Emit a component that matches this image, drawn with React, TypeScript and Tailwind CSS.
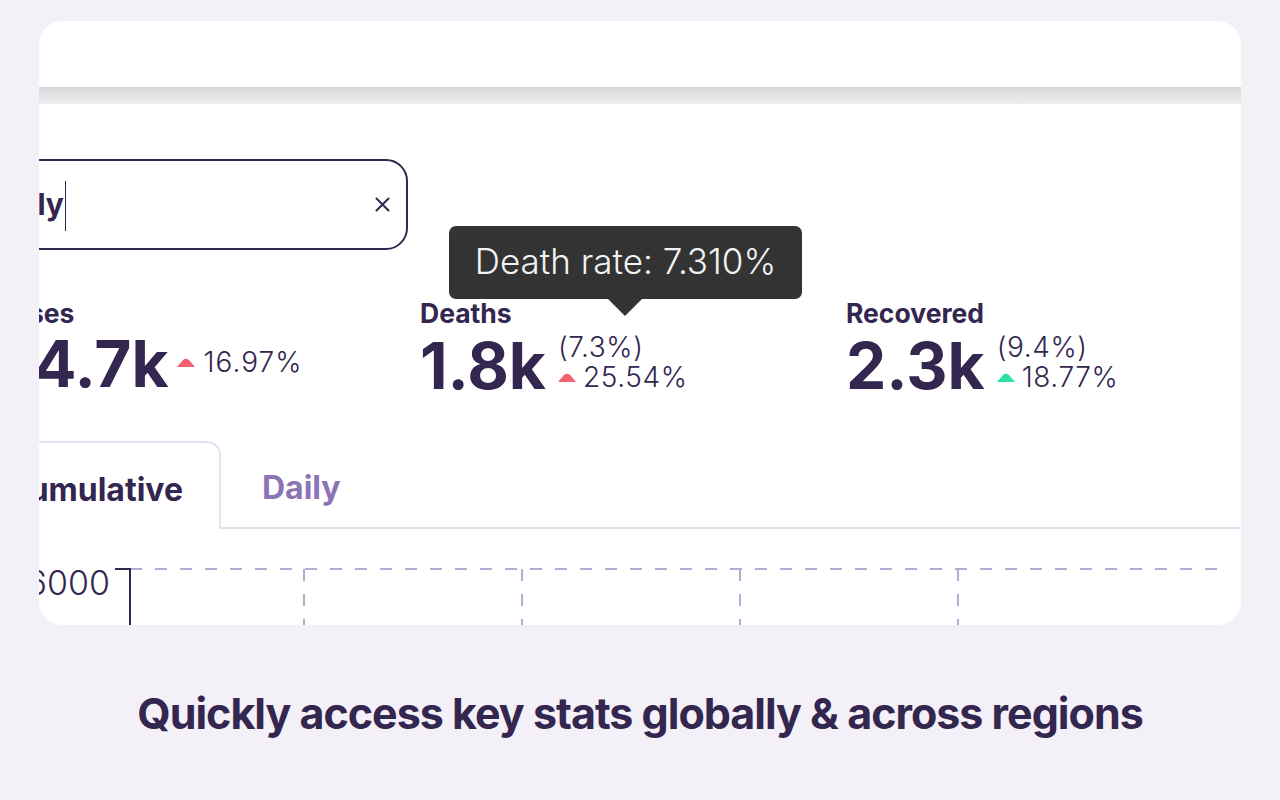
import React from "react";

const Tri = ({ color }: { color: string }) => (
  <svg width="18" height="9" viewBox="0 0 18 9" className="shrink-0">
    <path d="M0 9 L6 2 Q9 -0.5 12 2 L18 9 Z" fill={color} />
  </svg>
);

function Stat({
  label,
  value,
  pct,
  change,
  color,
  children,
}: {
  label: string;
  value: string;
  pct?: string;
  change: string;
  color: string;
  children?: React.ReactNode;
}) {
  return (
    <div className="relative w-[426px] shrink-0">
      {children}
      <div className="pt-[2px] text-[26.5px] font-bold leading-[28px] text-[#33264f]">{label}</div>
      <div className="mt-[5px] flex items-end">
        <div className="text-[64px] font-bold leading-[63px] text-[#33264f]">{value}</div>
        {pct ? (
          <div className="ml-[12px] flex flex-col pb-[5px] text-[28px] font-light leading-[30px] tracking-[0.6px] text-[#33264f]">
            <div>{pct}</div>
            <div className="flex items-center gap-[7px]">
              <Tri color={color} />
              <span>{change}</span>
            </div>
          </div>
        ) : (
          <div className="mb-[18px] ml-[8px] flex items-center gap-[9px] text-[28px] font-light leading-[30px] tracking-[1px] text-[#33264f]">
            <Tri color={color} />
            <span>{change}</span>
          </div>
        )}
      </div>
    </div>
  );
}

export default function App() {
  return (
    <div
      className="flex min-h-[800px] w-[1280px] flex-col items-center bg-[#f3f0f8]"
      style={{ fontFamily: "Inter, 'Noto Sans', sans-serif" }}
    >
      <div className="mt-[21px] h-[604px] w-[1202px] overflow-hidden rounded-[24px] bg-white">
        <div className="h-[66px]" />
        <div className="h-[17px] bg-gradient-to-b from-[#d8d8d8] to-[#ededed]" />
        <div className="-ml-[45px] w-[1400px]">
          {/* search */}
          <div className="ml-[-13px] mt-[55px] flex h-[91px] w-[427px] items-center rounded-[22px] border-2 border-[#33264f] pl-[17px] pr-[16px]">
            <span className="text-[30px] font-bold text-[#33264f]">Italy</span>
            <span className="ml-[1px] mt-[2px] h-[50px] w-px bg-[#33264f]" />
            <span className="flex-1" />
            <svg width="15" height="15" viewBox="0 0 15 15">
              <path d="M1.5 1.5 L13.5 13.5 M13.5 1.5 L1.5 13.5" stroke="#33264f" strokeWidth="2" strokeLinecap="round" />
            </svg>
          </div>

          {/* stats */}
          <div className="mt-[47px] flex">
            <Stat label="Cases" value="24.7k" change="16.97%" color="#f4606c" />
            <Stat label="Deaths" value="1.8k" pct="(7.3%)" change="25.54%" color="#f4606c">
              <div className="absolute left-[29px] top-[-71px] flex h-[73px] w-[353px] items-center justify-center rounded-[7px] bg-[#333333] pb-[2px] text-[35px] font-light text-[#f2f2f2]">
                Death rate: 7.310%
                <svg width="36" height="19" viewBox="0 0 36 19" className="absolute left-[158px] top-[72px]">
                  <path d="M0 0 L36 0 L18 18 Z" fill="#333333" />
                </svg>
              </div>
            </Stat>
            <Stat label="Recovered" value="2.3k" pct="(9.4%)" change="18.77%" color="#2de0a5" />
          </div>

          {/* tabs */}
          <div className="mt-[44px] flex h-[88px]">
            <div className="flex w-[227px] items-center justify-end rounded-tr-[14px] border-2 border-b-0 border-[#e6e0f2] pr-[36px] pt-[7px] text-[32px] font-bold text-[#33264f]">
              Cumulative
            </div>
            <div className="flex flex-1 items-center border-b-2 border-[#e6e0f2] pl-[41px] pt-[7px] text-[32px] font-bold text-[#8b73b5]">
              Daily
            </div>
          </div>

          {/* chart */}
          <svg width="1300" height="98" className="block">
            <text x="116" y="66" textAnchor="end" fontSize="34" fontWeight="300" fill="#33264f" fontFamily="Inter, sans-serif">
              6000
            </text>
            <line x1="136" y1="40" x2="1234" y2="40" stroke="#b9aad3" strokeWidth="2" strokeDasharray="12 13" />
            {[310, 528, 746, 964].map((x) => (
              <line key={x} x1={x} y1="40" x2={x} y2="98" stroke="#b9aad3" strokeWidth="2" strokeDasharray="12 13" />
            ))}
            <path d="M121 40 L136 40 L136 98" stroke="#33264f" strokeWidth="2" fill="none" />
          </svg>
        </div>
      </div>

      <div className="mt-[64px] text-[43px] font-bold leading-[48px] tracking-[-1px] text-[#33264f]">
        Quickly access key stats globally &amp; across regions
      </div>
    </div>
  );
}
